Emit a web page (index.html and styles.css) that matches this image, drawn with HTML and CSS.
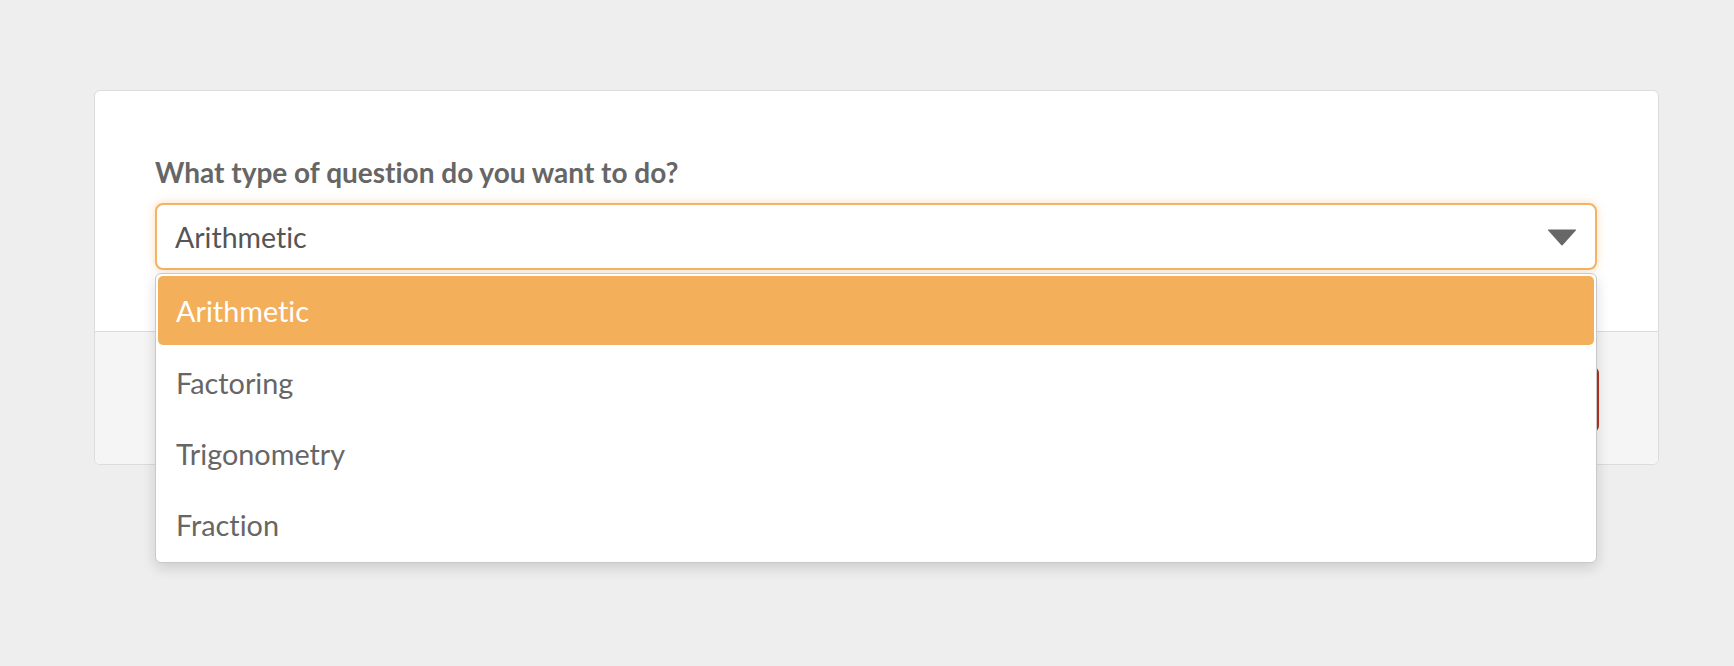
FILE: index.html
```html
<!DOCTYPE html>
<html lang="en">
<head>
<meta charset="utf-8">
<title>Question type</title>
<link rel="stylesheet" href="styles.css">
</head>
<body>
<div class="card">
  <div class="card-body">
    <label class="field-label">What type of question do you want to do?</label>
    <div class="select-wrap">
      <div class="select">
        <span class="select-value">Arithmetic</span>
        <svg class="caret" width="30" height="17" viewBox="0 0 30 17"><path d="M1.5 0.5 H28.5 Q29.6 0.5 28.8 1.6 L15.8 16 Q15 16.8 14.2 16 L1.2 1.6 Q0.4 0.5 1.5 0.5 Z" fill="#676767"/></svg>
      </div>
      <ul class="menu">
        <li class="option active">Arithmetic</li>
        <li class="option">Factoring</li>
        <li class="option">Trigonometry</li>
        <li class="option">Fraction</li>
      </ul>
    </div>
  </div>
  <div class="card-footer">
    <button class="btn">Start</button>
  </div>
</div>
</body>
</html>
```
FILE: styles.css
```css
html, body {
  margin: 0;
  padding: 0;
}
body {
  background: #eeeeee;
  font-family: "Lato", "Noto Sans", sans-serif;
  font-variant-ligatures: none;
  padding: 90px 75px 0 94px;
  height: 666px;
  box-sizing: border-box;
  overflow: hidden;
}
.card {
  background: #ffffff;
  border: 1px solid #dcdcdc;
  border-radius: 6px;
}
.card-body {
  padding: 64px 61px 61px 60px;
}
.field-label {
  display: block;
  font-size: 28px;
  line-height: 34px;
  font-weight: 700;
  color: #666666;
  margin-bottom: 14px;
}
.select-wrap {
  position: relative;
}
.select {
  height: 67px;
  box-sizing: border-box;
  border: 2px solid #f1b466;
  border-radius: 8px;
  background: #fff;
  box-shadow: 0 0 9px rgba(243, 175, 90, 0.45);
  display: flex;
  align-items: center;
  justify-content: space-between;
  padding: 0 18px 0 18px;
}
.select-value {
  font-size: 28.5px;
  color: #555555;
}
.caret {
  display: block;
  margin-top: 2px;
}
.menu {
  position: absolute;
  top: 70px;
  left: 0;
  right: 0;
  margin: 0;
  padding: 2px;
  list-style: none;
  background: #fff;
  border: 1px solid #c9c9c9;
  border-radius: 6px;
  box-shadow: 0 5px 14px rgba(0, 0, 0, 0.14);
  z-index: 5;
}
.option {
  height: 71px;
  display: flex;
  align-items: center;
  padding-left: 18px;
  font-size: 28.8px;
  color: #666666;
  border-radius: 5px;
}
.option.active {
  background: #f3af5a;
  color: #ffffff;
  height: 69px;
  margin-bottom: 2px;
}
.card-footer {
  background: #f5f5f5;
  border-top: 1px solid #dcdcdc;
  border-radius: 0 0 6px 6px;
  height: 133px;
  box-sizing: border-box;
  padding: 0 59px;
  display: flex;
  align-items: center;
  justify-content: flex-end;
}
.btn {
  height: 65px;
  padding: 0 40px;
  border: none;
  border-radius: 6px;
  background: #b5321f;
  color: #fff;
  font-family: inherit;
  font-size: 28px;
  margin-top: 2px;
}
```
